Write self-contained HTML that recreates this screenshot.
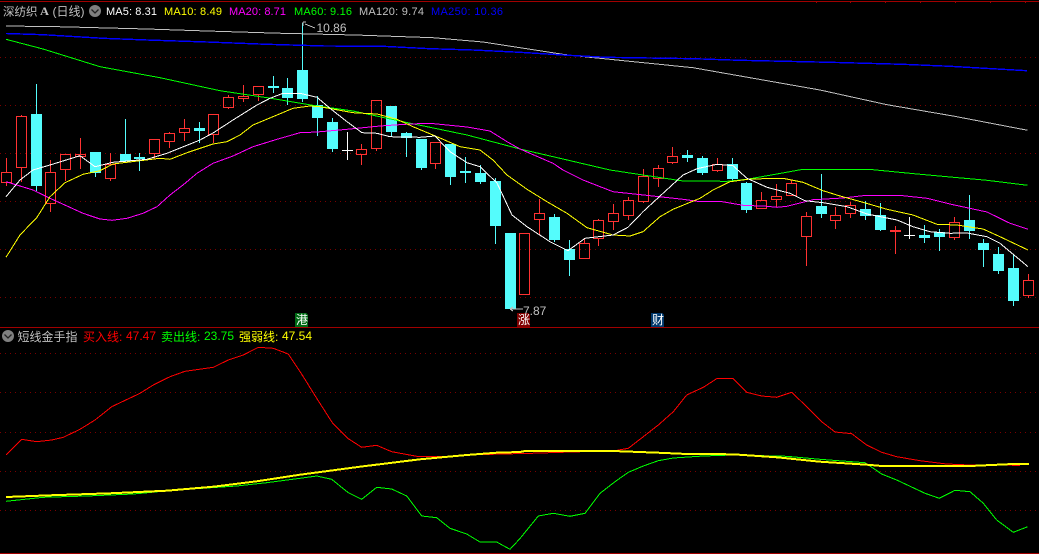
<!DOCTYPE html>
<html lang="zh"><head><meta charset="utf-8"><title>深纺织A</title>
<style>
html,body{margin:0;padding:0;background:#000;width:1039px;height:554px;overflow:hidden}
svg{display:block;position:absolute;left:0;top:0}
text{font-family:"Liberation Sans","WenQuanYi Zen Hei","Noto Sans CJK SC",sans-serif;font-size:11px}
.c{font-size:12px}
</style></head><body>
<svg width="1039" height="554" viewBox="0 0 1039 554" xmlns="http://www.w3.org/2000/svg">
<rect width="1039" height="554" fill="#000"/>
<g shape-rendering="crispEdges" fill="none">
<path d="M0 57.5H1039M0 105.5H1039M0 153.5H1039M0 201.5H1039M0 249.5H1039M0 297.5H1039M0 353.5H1039M0 392.5H1039M0 432.5H1039M0 471.5H1039M0 510.5H1039" stroke="#7a0000" stroke-dasharray="1 4"/>
<path d="M0 1.5H1039M816.5 1V3M850.5 1V3M885.5 1V3M920.5 1V3M955.5 1V3M990.5 1V3M1025.5 1V3M0 327.5H1039M0 553.5H1039" stroke="#a00000"/>
<!-- cyan wicks -->
<path stroke="#54fcfc" d="M36.5 84V191M95.5 152V177M125.5 119V163M139.5 153V171M199.5 122V143M273.5 76V93M287.5 78V105M302.5 23V102M317.5 96V136M332.5 118V152M391.5 106V136M406.5 132V157M421.5 139V170M450.5 144V185M465.5 157V183M480.5 165V184M495.5 178V244M554.5 214V242M569.5 240V276M687.5 150V162M702.5 156V175M732.5 158V181M746.5 182V213M821.5 174V218M865.5 201V220M880.5 203V231M924.5 225V243M939.5 229V251M969.5 195V239M983.5 239V267M998.5 247V274M1013.5 254V306"/>
<!-- cyan bodies -->
<path fill="#54fcfc" d="M31 114h11v72h-11zM90 152h11v21h-11zM120 154h11v7h-11zM134 157h11v2h-11zM194 128h11v3h-11zM268 86h11v2h-11zM282 88h11v10h-11zM297 70h11v29h-11zM312 105h11v13h-11zM327 122h11v27h-11zM386 106h11v26h-11zM401 133h11v5h-11zM416 139h11v29h-11zM445 144h11v33h-11zM460 171h11v2h-11zM475 173h11v9h-11zM490 181h11v45h-11zM505 233h11v76h-11zM549 217h11v23h-11zM564 249h11v11h-11zM682 155h11v3h-11zM697 158h11v15h-11zM727 164h11v15h-11zM741 183h11v27h-11zM816 206h11v8h-11zM860 209h11v7h-11zM875 215h11v15h-11zM919 235h11v3h-11zM934 232h11v5h-11zM964 220h11v11h-11zM978 243h11v7h-11zM993 254h11v17h-11zM1008 268h11v33h-11z"/>
<!-- red candles -->
<path stroke="#ff3232" d="M1.5 172.5h10v10h-10zM6.5 158V172M6.5 183V186M16.5 116.5h10v51h-10zM21.5 115V116M21.5 168V182M45.5 172.5h10v31h-10zM50.5 160V172M50.5 204V212M60.5 154.5h10v15h-10zM65.5 170V181M75.5 154.5h10v2h-10zM80.5 138V154M80.5 157V169M105.5 164.5h10v14h-10zM110.5 153V164M110.5 179V181M149.5 139.5h10v14h-10zM154.5 154V159M164.5 133.5h10v8h-10zM169.5 132V133M169.5 142V148M179.5 128.5h10v4h-10zM184.5 119V128M184.5 133V141M208.5 114.5h10v20h-10zM213.5 135V143M223.5 97.5h10v10h-10zM228.5 95V97M228.5 108V109M238.5 96.5h10v2h-10zM243.5 85V96M243.5 99V102M253.5 86.5h10v8h-10zM258.5 95V101M356.5 149.5h10v5h-10zM361.5 144V149M361.5 155V165M371.5 100.5h10v48h-10zM376.5 149V151M430.5 142.5h10v21h-10zM435.5 164V169M519.5 233.5h10v61h-10zM534.5 213.5h10v6h-10zM539.5 199V213M539.5 220V235M579.5 243.5h10v15h-10zM584.5 239V243M593.5 220.5h10v18h-10zM598.5 219V220M598.5 239V246M608.5 213.5h10v8h-10zM613.5 204V213M613.5 222V230M623.5 200.5h10v15h-10zM628.5 197V200M628.5 216V220M638.5 176.5h10v25h-10zM643.5 169V176M643.5 202V203M653.5 168.5h10v10h-10zM658.5 165V168M658.5 179V187M667.5 156.5h10v6h-10zM672.5 147V156M672.5 163V164M712.5 164.5h10v6h-10zM717.5 158V164M717.5 171V172M756.5 200.5h10v8h-10zM761.5 192V200M771.5 196.5h10v3h-10zM776.5 184V196M776.5 200V207M786.5 183.5h10v12h-10zM791.5 180V183M801.5 216.5h10v20h-10zM806.5 212V216M806.5 237V266M830.5 215.5h10v5h-10zM835.5 207V215M835.5 221V229M845.5 205.5h10v8h-10zM850.5 202V205M850.5 214V218M949.5 222.5h10v15h-10zM954.5 217V222M954.5 238V240M1023.5 280.5h10v15h-10zM1028.5 274V280M1028.5 296V298M895.5 226V254"/>
<path fill="#ff3232" d="M890 230h11v2h-11z"/>
<!-- white crosses -->
<path stroke="#fff" d="M347.5 132V160M342 150.5h11M909.5 217V239M904 235.5h11"/>
<!-- MA lines -->
<polyline stroke="#c0c0c0" points="6,26 58,26.7 147,29 207,31 282,33.3 355,35 433,37.7 483,42 520,47.7 563,54.3 590,57.3 693,67.7 820,90 887,104.7 953,116 1027.7,130.3"/>
<polyline stroke="#0000ff" stroke-width="1.4" points="6,33.5 43,34.7 103,38.3 147,40 207,42 267,44.3 325,46 383,46.3 430,48.7 473,50 520,52.3 563,55 605.7,57.3 693,58.7 740,60.3 830,62.3 903,64.3 950,66.3 1027,70.7"/>
<polyline stroke="#00ff00" points="6,39.3 43,49 100,66.7 160,77.7 220,90.7 267,97.7 313,105.3 353,111 403,121.7 467,135 520,149 563,159 610,170 643,175 683,181 727,181.3 747,179.3 773,174.7 803,169.3 873,169.7 917,174 987,180.3 1027.7,185.3"/>
<polyline stroke="#ff00ff" points="6,181.7 20,186 33,190 50,198.3 67,206 83,213.3 100,219 112,220.3 127,218.3 143,213.3 157,206.7 170,195 183,185 197,173.3 213,163.3 233,156 253,146.7 277,139.3 300,132.7 317,132 347,129.3 380,126 410,124 430,123.3 467,127 490,131 507,141.7 520,149 553,163.3 563,170 583,180 613,191.7 650,195.7 683,199.3 700,201.7 710,201.3 720,201.3 743,205.3 767,206.3 777,207.3 787,206.3 800,203 813,199.7 843,198 863,195.7 903,195.7 927,198.3 953,204.7 987,212 1010,223.3 1028,229.3"/>
<polyline stroke="#ffff00" points="6,257.3 20,235 37,217.3 50,196.7 65,182.7 83,174.3 100,170.7 113,164 140,160.7 160,158.3 170,159.3 187,152.7 213,144 227,141.7 240,135 253,125 277,115 293,108.3 310,106 320,106.7 353,112.7 377,114 397,119.3 413,126.7 437,136.7 460,146.7 480,150 493,160 507,175 527,189.3 547,201.7 567,213.3 587,227.7 613,235 630,236 643,231.7 660,216.7 673,209.3 700,198.3 713,190 730,181.7 750,179 783,178.3 803,182.3 823,190.7 840,196 863,202.3 887,209.3 913,215 937,224.3 957,225 983,229 1000,236.7 1028,250"/>
<polyline stroke="#ffffff" points="6,196.7 20,180 33,170 50,165 80,155.7 95,166.7 113,162.3 147,159.3 167,153.3 200,140 213,133 233,120 257,105 270,98.3 283,93.3 300,93.3 317,97.3 330,108.3 347,121.7 362,132.7 377,133.3 390,136.7 420,137.3 435,136 450,151.7 467,162.7 480,166.7 497,183 512,215 527,226.7 550,241.7 568,250.7 585,238.3 613,235 628,227.3 643,211.7 663,193.3 683,175 697,168.7 717,164.3 733,165.7 747,178.3 767,187.3 790,193.3 805,200.7 823,202.7 847,206.7 867,214 897,220 913,226.7 930,231.7 950,233.3 967,233 987,236.7 1000,243.3 1028,266.7"/>
<!-- lower pane -->
<polyline stroke="#ff0000" points="6,455 21.7,439.3 36.7,441.7 51.7,440 63.3,437.3 80,429.3 95,420 111.7,406.7 140,393.3 153.3,385 170,376.7 185,371.3 213.3,367.3 228.3,360 243.3,355 258.3,347.3 273.3,348.3 288.3,354 303.3,376.7 316.7,398.3 332.7,423.3 348.3,438.7 361.7,447.3 376.7,445.3 391.7,451.7 416.7,456.3 441.7,456.7 466.7,455 503,454 531.7,453.3 561.7,452.3 615,450.7 628.3,448.3 643.3,436.7 658.3,425 673.3,411.7 686.7,395 703.3,387.3 717.3,378.3 732.7,378.3 746.7,392.3 761.7,396 776.7,397.3 791.7,392.3 806.7,406.7 821.7,421.7 835,432 851.7,433.7 866.7,445 881.7,452.3 896.7,456.7 920,460.7 946.7,464 970,465 1020,465.3"/>
<polyline stroke="#00ff00" points="6,501.3 43.3,497.3 86.7,496 133.3,494 176.7,490 236.7,486 266.7,482.7 300,478.3 316.7,476 331.7,479.3 348.3,492.7 361.7,499.3 376.7,487.3 391.7,489 406.7,496 421.7,516 436.7,517.7 450,528.3 466.7,534 480,542 496.7,542 510,549.3 520,538.5 538.3,516 553.3,513.3 570,516.3 585,513.3 600,493.3 615,481.7 628.3,472.3 643.3,466 658.3,460.7 673.3,458 703.3,456 733.3,455 786.7,456.3 820,459.3 865,462.7 881.7,474 896.7,480 925,493.3 939.3,498.3 955,490.3 970,491.7 983.3,503.3 996.7,520 1013.3,532.3 1027.7,526.7"/>
<polyline stroke="#ffff00" stroke-width="2" points="6,497 50,495.3 110,493.3 166.7,490.7 213.3,486.7 256.7,481.3 300,474.7 360,466.7 420,459.3 466.7,455 496.7,452.7 520,452 525,451 613,451 658,452.7 687,454 733,454.3 777,457.3 820,461.7 867,464.7 882,466 970,466 1013,464 1029,464"/>
<!-- markers -->
<path stroke="#c0c0c0" d="M303 22h3M303 22v4M305 24l10 4M510 309h13M510 309l3-2M510 309l3 2"/>
<path fill="#006a14" d="M295 313h11l2 2v12h-13z"/>
<path fill="#800000" d="M517 313h11l2 2v12h-13z"/>
<path fill="#00386c" d="M651 313h11l2 2v12h-13z"/>
</g>
<!-- header -->
<text class="c" x="3" y="15.500" fill="#c0c0c0" style="font-size:11.500px">深纺织</text>
<text x="40" y="15" fill="#c0c0c0" style="font-family:'Liberation Serif',serif;font-weight:bold;font-size:12px" textLength="9" lengthAdjust="spacingAndGlyphs">A</text>
<text class="c" x="52.500" y="15.500" fill="#c0c0c0" style="font-size:12px">(日线)</text>
<circle cx="95" cy="11" r="6" fill="#808080"/>
<path d="M91.5 9.5L95 13L98.5 9.5" fill="none" stroke="#222" stroke-width="1.3"/>
<text x="106" y="15" fill="#fff" textLength="51">MA5: 8.31</text>
<text x="164" y="15" fill="#ff0" textLength="58">MA10: 8.49</text>
<text x="229" y="15" fill="#f0f" textLength="57">MA20: 8.71</text>
<text x="294" y="15" fill="#0f0" textLength="58">MA60: 9.16</text>
<text x="359" y="15" fill="#c0c0c0" textLength="65">MA120: 9.74</text>
<text x="431" y="15" fill="#00f" textLength="72">MA250: 10.36</text>
<text class="c" x="316.500" y="32" fill="#c0c0c0">10.86</text>
<text class="c" x="523" y="315" fill="#c0c0c0">7.87</text>
<text x="296" y="324" fill="#fff" style="font-size:12px">港</text>
<text x="518" y="324" fill="#fff" style="font-size:12px">涨</text>
<text x="652" y="324" fill="#fff" style="font-size:12px">财</text>
<!-- lower header -->
<circle cx="8" cy="336" r="6" fill="#808080"/>
<path d="M4.500 334.500L8 338L11.500 334.500" fill="none" stroke="#222" stroke-width="1.300"/>
<text class="c" x="17.500" y="341" fill="#c0c0c0">短线金手指</text>
<text class="c" x="83" y="341" fill="#f00">买入线:</text><text class="c" x="126" y="340" fill="#f00">47.47</text>
<text class="c" x="161" y="341" fill="#0f0">卖出线:</text><text class="c" x="204" y="340" fill="#0f0">23.75</text>
<text class="c" x="239" y="341" fill="#ff0">强弱线:</text><text class="c" x="282" y="340" fill="#ff0">47.54</text>
</svg>
</body></html>
